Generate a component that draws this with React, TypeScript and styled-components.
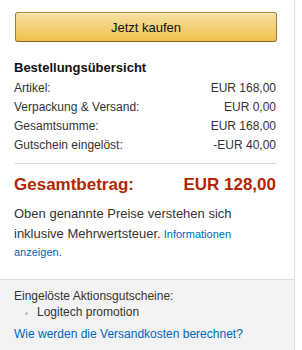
import React from "react";
import styled, { createGlobalStyle } from "styled-components";

const Global = createGlobalStyle`
  html, body { margin: 0; padding: 0; background: #fff; }
  body { font-family: Arial, "Liberation Sans", sans-serif; color: #111; }
`;

const Panel = styled.div`
  width: 294px;
  border-right: 1px solid #ddd;
  min-height: 350px;
  display: flex;
  flex-direction: column;
  background: #f3f3f3;
`;

const Top = styled.div`
  background: #fff;
  padding: 12px 18px 18px 14px;
  border-bottom: 1px solid #ddd;
`;

const BuyButton = styled.button`
  display: block;
  width: 262px;
  margin-left: 1px;
  height: 30px;
  box-sizing: border-box;
  border: 1px solid;
  border-color: #a88734 #9c7e31 #846a29;
  border-radius: 3px;
  background: linear-gradient(to bottom, #f7dfa5, #f0c14b);
  box-shadow: inset 0 1px 0 rgba(255, 255, 255, 0.4);
  font-family: Arial, "Liberation Sans", sans-serif;
  font-size: 13px;
  color: #111;
  padding: 0;
  cursor: pointer;
`;

const Heading = styled.div`
  margin-top: 16px;
  font-size: 13px;
  font-weight: bold;
  line-height: 19px;
  margin-bottom: 2px;
`;

const Row = styled.div`
  display: flex;
  justify-content: space-between;
  font-size: 12px;
  line-height: 19px;
  color: #333;
`;

const Divider = styled.div`
  height: 1px;
  background: #ddd;
  margin: 8px 0 10px;
`;

const Total = styled.div`
  display: flex;
  justify-content: space-between;
  font-size: 17px;
  line-height: 21px;
  font-weight: bold;
  color: #b12704;
`;

const Note = styled.p`
  margin: 9px 0 0;
  font-size: 11px;
  line-height: 17px;
  color: #333;
`;

const NoteText = styled.span`
  font-size: 13px;
  line-height: 20px;
`;

const Link = styled.a<{ $small?: boolean }>`
  color: #0066c0;
  text-decoration: none;
  font-size: ${(p) => (p.$small ? "11px" : "12px")};
`;

const Bottom = styled.div`
  padding: 8px 18px 12px 14px;
  font-size: 12px;
  line-height: 16px;
  color: #333;
`;

const PromoList = styled.ul`
  margin: 0;
  padding: 0 0 0 23px;
  list-style: disc;
  li::marker { color: #bbb; font-size: 9px; }
`;

const ShipLink = styled.div`
  margin-top: 6px;
  line-height: 17px;
`;

export default function App() {
  const rows: [string, string][] = [
    ["Artikel:", "EUR 168,00"],
    ["Verpackung & Versand:", "EUR 0,00"],
    ["Gesamtsumme:", "EUR 168,00"],
    ["Gutschein eingelöst:", "-EUR 40,00"],
  ];
  return (
    <>
      <Global />
      <Panel>
        <Top>
          <BuyButton>Jetzt kaufen</BuyButton>
          <Heading>Bestellungsübersicht</Heading>
          {rows.map(([l, v]) => (
            <Row key={l}>
              <span>{l}</span>
              <span>{v}</span>
            </Row>
          ))}
          <Divider />
          <Total>
            <span>Gesamtbetrag:</span>
            <span>EUR 128,00</span>
          </Total>
          <Note>
            <NoteText>
              Oben genannte Preise verstehen sich inklusive Mehrwertsteuer.
            </NoteText>{" "}
            <Link $small href="#">Informationen anzeigen.</Link>
          </Note>
        </Top>
        <Bottom>
          <div>Eingelöste Aktionsgutscheine:</div>
          <PromoList>
            <li>Logitech promotion</li>
          </PromoList>
          <ShipLink>
            <Link href="#">Wie werden die Versandkosten berechnet?</Link>
          </ShipLink>
        </Bottom>
      </Panel>
    </>
  );
}
